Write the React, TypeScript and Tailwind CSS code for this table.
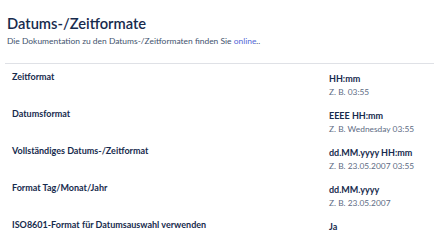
import React from 'react';

interface FormatRow {
  label: string;
  value: string;
  example?: string;
}

const rows: FormatRow[] = [
  { label: 'Zeitformat', value: 'HH:mm', example: 'Z. B. 03:55' },
  { label: 'Datumsformat', value: 'EEEE HH:mm', example: 'Z. B. Wednesday 03:55' },
  { label: 'Vollständiges Datums-/Zeitformat', value: 'dd.MM.yyyy HH:mm', example: 'Z. B. 23.05.2007 03:55' },
  { label: 'Format Tag/Monat/Jahr', value: 'dd.MM.yyyy', example: 'Z. B. 23.05.2007' },
  { label: 'ISO8601-Format für Datumsauswahl verwenden', value: 'Ja' },
];

export default function App() {
  return (
    <div
      className="w-[434px] h-[241px] overflow-hidden bg-white pl-[5px]"
      style={{ fontFamily: 'Lato, "Open Sans", sans-serif' }}
    >
      <div className="pl-[2px] pt-[13px]">
        <h1 className="text-[14.7px] leading-[20px] font-semibold text-[#172b4d]">
          Datums-/Zeitformate
        </h1>
        <p className="mt-[1px] text-[8.45px] leading-[14px] text-[#42526e]">
          Die Dokumentation zu den Datums-/Zeitformaten finden Sie{' '}
          <a className="text-[#5065d6]">online</a>..
        </p>
      </div>

      <div className="mt-[15px] border-t border-[#dfe1e6]">
        {rows.map((row) => (
          <div key={row.label} className="flex h-[37px] pt-[6px]">
            <div className="w-[324px] pl-[7px] text-[9px] leading-[14px] font-bold text-[#172b4d]">
              {row.label}
            </div>
            <div className="pt-[2px]">
              <div className="text-[9px] leading-[14px] font-bold text-[#172b4d]">{row.value}</div>
              {row.example && (
                <div className="text-[8.4px] leading-[13px] text-[#5e6c84]">{row.example}</div>
              )}
            </div>
          </div>
        ))}
      </div>
    </div>
  );
}
